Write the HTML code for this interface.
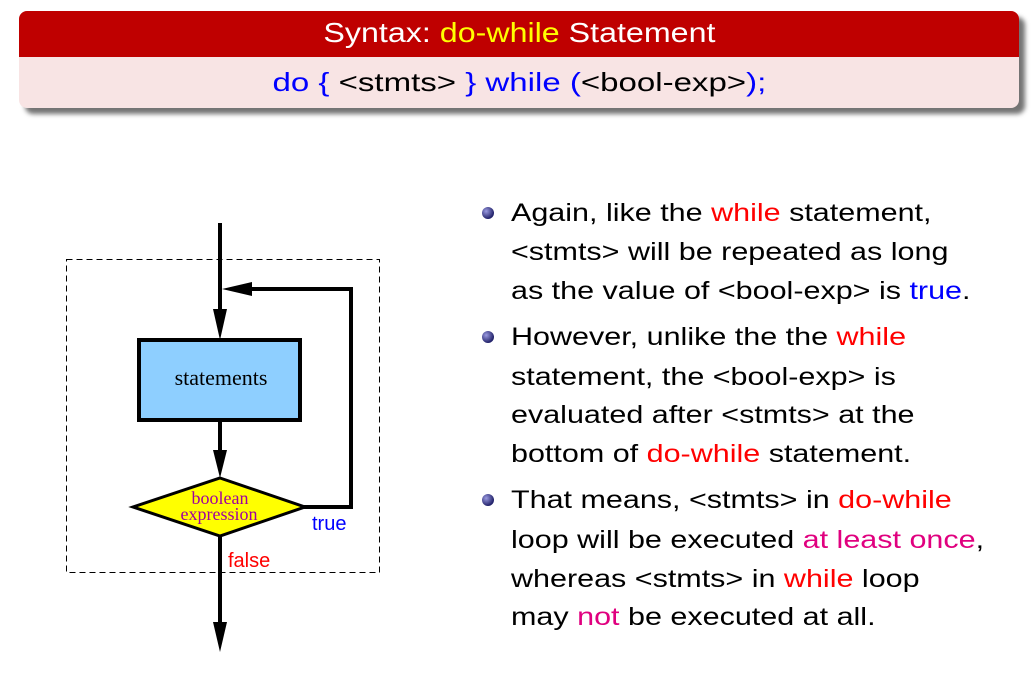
<!DOCTYPE html>
<html><head><meta charset="utf-8"><style>
body{margin:0;width:1032px;height:679px;background:#fff;position:relative;overflow:hidden;font-family:"Liberation Sans",sans-serif}
.hdr{position:absolute;left:19px;top:11px;width:1000px;height:97px;border-radius:8px;box-shadow:6px 6px 5px rgba(0,0,0,.55);overflow:hidden;background:#f8e4e4}
.t{position:absolute;left:0;top:0;width:100%;height:46px;background:#bf0000;color:#fff;font-size:28px;text-align:center;line-height:44px}
.s{position:absolute;left:0;top:53px;width:100%;text-align:center;font-size:26px;line-height:36px;color:#000}
.t span.w,.s span.w{display:inline-block}
.t span.w{transform:scaleX(1.15)}
.s span.w{transform:scaleX(1.27)}
.b{color:#00f}.y{color:#ff0}.r{color:#f00}.m{color:#e0007f}
.l{position:absolute;left:511px;font-size:25px;white-space:nowrap;line-height:30px;transform:scaleX(1.22);transform-origin:0 0}
.d{position:absolute;left:482px;width:12px;height:12px;border-radius:50%;background:radial-gradient(circle at 35% 35%,#9a9ae0,#22226a 70%)}
</style></head><body>
<div class="hdr"><div class="t"><span class="w">Syntax: <span class="y">do-while</span> Statement</span></div>
<div class="s"><span class="w"><span class="b">do {</span> &lt;stmts&gt; <span class="b">} while (</span>&lt;bool-exp&gt;<span class="b">);</span></span></div></div>
<svg style="position:absolute;left:0;top:0" width="1032" height="679">
<rect x="66.5" y="259.5" width="313" height="313" fill="none" stroke="#000" stroke-dasharray="6,4" stroke-width="1"/>
<line x1="220" y1="223" x2="220" y2="315" stroke="#000" stroke-width="4"/>
<polygon points="213,309 227,309 220,340" fill="#000"/>
<polyline points="240,289 351,289 351,507 300,507" fill="none" stroke="#000" stroke-width="4"/>
<polygon points="222,289 252,282 252,296" fill="#000"/>
<rect x="139" y="340" width="161" height="80" fill="#8ecfff" stroke="#000" stroke-width="4"/>
<text x="221" y="385" font-family="Liberation Serif" font-size="22" text-anchor="middle">statements</text>
<line x1="220" y1="420" x2="220" y2="455" stroke="#000" stroke-width="4"/>
<polygon points="213,450 227,450 220,478" fill="#000"/>
<polygon points="220,478 305,507 220,536 133,507" fill="#ff0" stroke="#000" stroke-width="3"/>
<text x="220" y="504" font-family="Liberation Serif" font-size="18" fill="#a000a0" text-anchor="middle">boolean</text>
<text x="219" y="520" font-family="Liberation Serif" font-size="18" fill="#a000a0" text-anchor="middle">expression</text>
<text x="312" y="530" font-size="20" fill="#00f">true</text>
<text x="228" y="567" font-size="20" fill="#f00">false</text>
<line x1="220" y1="536" x2="220" y2="628" stroke="#000" stroke-width="4"/>
<polygon points="213,622 227,622 220,652" fill="#000"/>
</svg>
<div class="d" style="top:207px"></div>
<div class="l" style="top:198px">Again, like the <span class="r">while</span> statement,</div>
<div class="l" style="top:237px">&lt;stmts&gt; will be repeated as long</div>
<div class="l" style="top:276px">as the value of &lt;bool-exp&gt; is <span class="b">true</span>.</div>
<div class="d" style="top:331px"></div>
<div class="l" style="top:322px">However, unlike the the <span class="r">while</span></div>
<div class="l" style="top:362px">statement, the &lt;bool-exp&gt; is</div>
<div class="l" style="top:400px">evaluated after &lt;stmts&gt; at the</div>
<div class="l" style="top:439px">bottom of <span class="r">do-while</span> statement.</div>
<div class="d" style="top:494px"></div>
<div class="l" style="top:485px">That means, &lt;stmts&gt; in <span class="r">do-while</span></div>
<div class="l" style="top:525px">loop will be executed <span class="m">at least once</span>,</div>
<div class="l" style="top:564px">whereas &lt;stmts&gt; in <span class="r">while</span> loop</div>
<div class="l" style="top:602px">may <span class="m">not</span> be executed at all.</div>
</body></html>
